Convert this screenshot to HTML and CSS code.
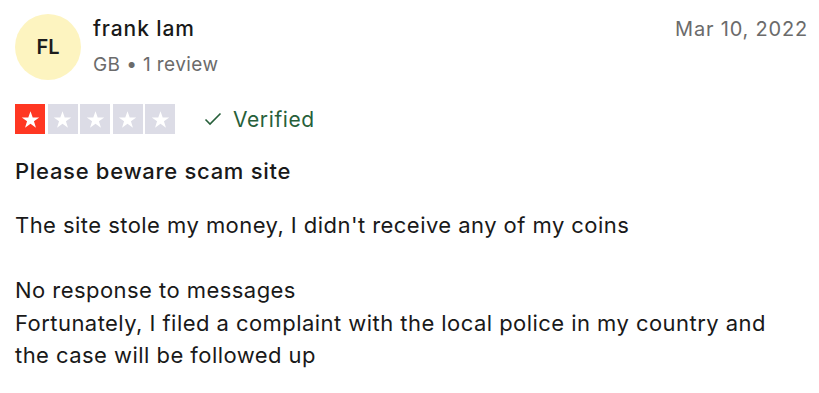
FILE: index.html
```html
<!DOCTYPE html>
<html>
<head>
<meta charset="utf-8">
<link rel="stylesheet" href="styles.css">
</head>
<body>
<article class="review">
  <header class="head">
    <div class="consumer">
      <div class="avatar">FL</div>
      <div class="info">
        <div class="name">frank lam</div>
        <div class="meta">GB • 1 review</div>
      </div>
    </div>
    <time class="date">Mar 10, 2022</time>
  </header>
  <div class="rating-row">
    <div class="stars">
      <span class="star on"><svg viewBox="0 0 24 24"><path d="M12 3.5l2.3 6.4h6.8l-5.5 4 2.1 6.6L12 16.4l-5.7 4.1 2.1-6.6-5.5-4h6.8z"/></svg></span>
      <span class="star"><svg viewBox="0 0 24 24"><path d="M12 3.5l2.3 6.4h6.8l-5.5 4 2.1 6.6L12 16.4l-5.7 4.1 2.1-6.6-5.5-4h6.8z"/></svg></span>
      <span class="star"><svg viewBox="0 0 24 24"><path d="M12 3.5l2.3 6.4h6.8l-5.5 4 2.1 6.6L12 16.4l-5.7 4.1 2.1-6.6-5.5-4h6.8z"/></svg></span>
      <span class="star"><svg viewBox="0 0 24 24"><path d="M12 3.5l2.3 6.4h6.8l-5.5 4 2.1 6.6L12 16.4l-5.7 4.1 2.1-6.6-5.5-4h6.8z"/></svg></span>
      <span class="star"><svg viewBox="0 0 24 24"><path d="M12 3.5l2.3 6.4h6.8l-5.5 4 2.1 6.6L12 16.4l-5.7 4.1 2.1-6.6-5.5-4h6.8z"/></svg></span>
    </div>
    <div class="verified">
      <svg viewBox="0 0 18 18" class="check"><path d="M1.5 9.5l4.5 4.5L16.5 3.5" fill="none" stroke="currentColor" stroke-width="1.6"/></svg>
      <span>Verified</span>
    </div>
  </div>
  <h2 class="title">Please beware scam site</h2>
  <p class="text">The site stole my money, I didn't receive any of my coins<br><br>No response to messages<br>Fortunately, I filed a complaint with the local police in my country and the case will be followed up</p>
</article>
</body>
</html>
```
FILE: styles.css
```css
* { box-sizing: border-box; }
html, body { margin: 0; background: #fff; }
body {
  font-family: Inter, "Open Sans", sans-serif;
  color: #191919;
}
.review { padding: 14px 11px 0 15px; }
.head { display: flex; justify-content: space-between; align-items: flex-start; }
.consumer { display: flex; align-items: flex-start; gap: 12px; }
.avatar {
  width: 66px; height: 66px; border-radius: 50%;
  background: #fdf4c0;
  display: flex; align-items: center; justify-content: center;
  font-size: 20px; font-weight: 600; color: #1c1c1c;
}
.info { padding-top: 1px; }
.name { font-size: 21px; font-weight: 550; line-height: 28px; letter-spacing: 0.9px; }
.meta { font-size: 19px; color: #6b6b6b; line-height: 28px; margin-top: 8px; letter-spacing: 0.4px; }
.date { font-size: 20px; color: #6b6b6b; line-height: 28px; padding-top: 1px; letter-spacing: 0.8px; }
.rating-row { display: flex; align-items: center; gap: 29px; margin-top: 24px; }
.stars { display: flex; gap: 2.5px; }
.star { width: 30px; height: 30px; background: #dcdce6; display: flex; align-items: center; justify-content: center; }
.star.on { background: #ff3722; }
.star svg { width: 23px; height: 23px; fill: #fff; }
.verified { display: flex; align-items: center; gap: 11px; color: #275f3a; font-size: 21px; letter-spacing: 0.6px; }
.check { width: 18px; height: 18px; }
.title { font-size: 22px; font-weight: 550; margin: 22px 0 0; line-height: 30px; letter-spacing: 0.7px; }
.text { font-size: 22px; line-height: 32.5px; margin: 23px 0 0; letter-spacing: 0.45px; max-width: 780px; }
```
